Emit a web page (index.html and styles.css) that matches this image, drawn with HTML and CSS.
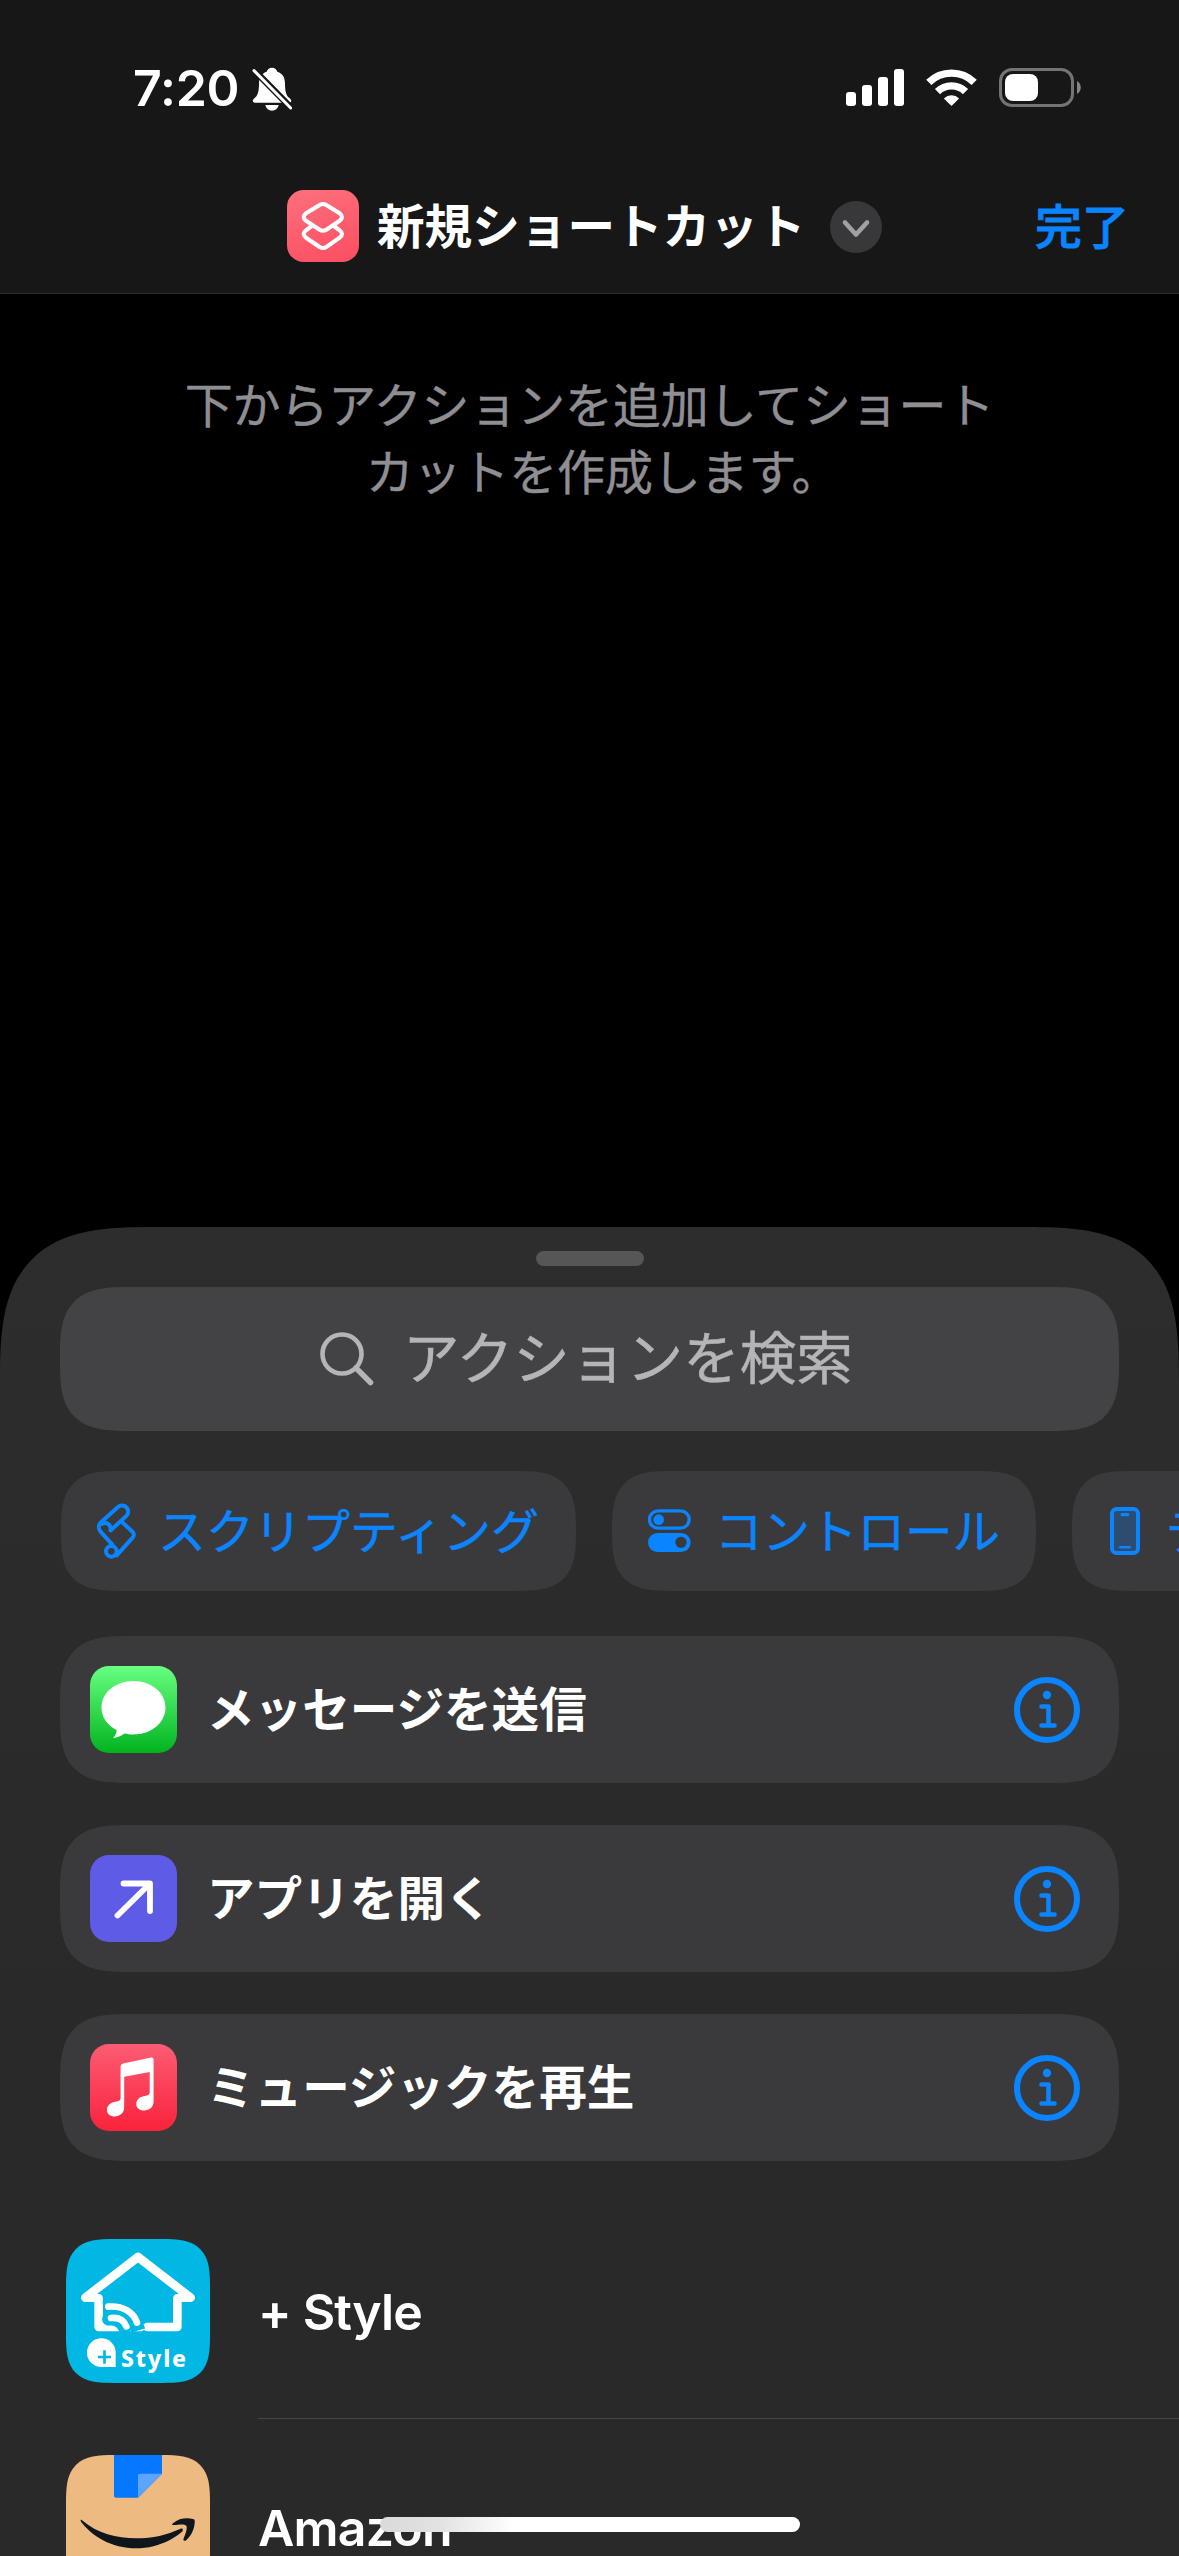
FILE: index.html
```html
<!DOCTYPE html>
<html lang="ja">
<head>
<meta charset="utf-8">
<title>新規ショートカット</title>
<link rel="stylesheet" href="styles.css">
</head>
<body>
<div class="screen">
  <header class="header">
    <div class="status">
      <div class="status-left">
        <span class="time">7:20</span>
        <svg class="bell" viewBox="0 0 120 132" width="40" height="44">
          <path fill="#fff" d="M60 2c-9 0-14 5-16 12C27 20 21 32 21 50c0 24-4 36-14 44-7 6-6 13 3 13h100c9 0 10-7 3-13-10-8-14-20-14-44 0-18-6-30-23-36C74 7 69 2 60 2zM40 114h40c-2 10-10 17-20 17s-18-7-20-17z"/>
          <path stroke="#171717" stroke-width="20" d="M0 3l124 126"/>
          <path stroke="#fff" stroke-width="9" stroke-linecap="round" d="M6 11l110 112"/>
        </svg>
      </div>
      <div class="status-right">
        <svg width="58" height="37" viewBox="0 0 58 37" fill="#fff">
          <rect x="0" y="23" width="10" height="14" rx="3"/><rect x="16" y="16" width="10" height="21" rx="3"/><rect x="32" y="8" width="10" height="29" rx="3"/><rect x="48" y="0" width="10" height="37" rx="3"/>
        </svg>
        <svg class="wifi" width="51" height="37" viewBox="0 0 51 37">
          <g fill="none" stroke="#fff" stroke-width="7.4"><path d="M2.8 13.4a32.5 32.5 0 0 1 45.4 0"/><path d="M11.5 22.6a20 20 0 0 1 28 0"/></g>
          <path fill="#fff" d="M25.5 37l-7.6-7.6a11 11 0 0 1 15.2 0z"/>
        </svg>
        <svg class="battery" width="82" height="39" viewBox="0 0 82 39">
          <rect x="1.5" y="1.5" width="72" height="36" rx="11.5" fill="none" stroke="#747474" stroke-width="3"/>
          <rect x="6" y="6" width="33" height="27" rx="8" fill="#fff"/>
          <path fill="#858585" d="M78 13c5 2.500 5 10.500 0 13z"/>
        </svg>
      </div>
    </div>
    <div class="nav">
      <div class="nav-title">
        <svg class="shortcut-icon" width="72" height="72" viewBox="0 0 216 216">
          <defs><linearGradient id="pink" x1=".3" y1="0" x2=".6" y2="1"><stop offset="0" stop-color="#fe6d7b"/><stop offset="1" stop-color="#fb5163"/></linearGradient></defs>
          <rect width="216" height="216" rx="50" fill="url(#pink)"/>
          <g fill="none" stroke="#fff" stroke-width="12.500" stroke-linejoin="round">
            <path d="M98 45q10-6 20 0l40 25q14 11 0 22l-40 27q-10 6-20 0L57 92q-14-11 0-22z"/>
            <path d="M74 108l-17 13q-14 10 0 22l41 28q10 6 20 0l40-28q14-11 0-22l-17-13"/>
          </g>
        </svg>
        <h1 class="title">新規ショートカット</h1>
        <svg class="chevron" width="52" height="52" viewBox="0 0 52 52">
          <circle cx="26" cy="26" r="26" fill="#38383a"/>
          <path d="M15 21.500l11 12 11-12" fill="none" stroke="#a0a0a7" stroke-width="4.600" stroke-linecap="round" stroke-linejoin="round"/>
        </svg>
      </div>
      <span class="done">完了</span>
    </div>
  </header>

  <main class="canvas">
    <p class="hint">下からアクションを追加してショート<br><span class="hint-end">カットを作成します。</span></p>
  </main>

  <section class="sheet">
    <div class="grabber"></div>
    <div class="search">
      <svg width="54" height="54" viewBox="0 0 54 54" fill="none" stroke="#b5b5b7" stroke-width="4.600" stroke-linecap="round"><circle cx="22" cy="22" r="19.500"/><path d="M36 36l14.500 14.500" stroke-width="5.500"/></svg>
      <span>アクションを検索</span>
    </div>

    <div class="chips">
      <div class="chip chip-script">
        <svg width="60" height="70" viewBox="0 0 180 210" fill="none" stroke="#0a84ff" stroke-width="12" stroke-linecap="round" stroke-linejoin="round">
          <path d="M62 103l46-42A17 17 0 0 0 84 33L33 79A20 20 0 0 0 31 106l36 40"/>
          <path d="M36 84c14-8 28 2 26 19"/>
          <path d="M94 76l34 32a12 12 0 0 1 0 17L80 178"/>
          <circle cx="64" cy="166" r="16"/>
        </svg>
        <span>スクリプティング</span>
      </div>
      <div class="chip chip-control">
        <svg width="60" height="70" viewBox="0 0 180 210">
          <rect x="28.500" y="44.500" width="119" height="52" rx="26" fill="none" stroke="#0a84ff" stroke-width="10"/>
          <circle cx="56" cy="71" r="16" fill="#0a84ff"/>
          <rect x="24" y="111" width="128" height="57" rx="28.500" fill="#0a84ff"/>
          <circle cx="123" cy="139" r="17" fill="#3a3a3c"/>
        </svg>
        <span>コントロール</span>
      </div>
      <div class="chip chip-device">
        <svg width="30" height="48" viewBox="0 0 30 48">
          <rect x="2" y="2" width="26" height="44" rx="4.500" fill="#2e4c70" stroke="#0a84ff" stroke-width="4"/>
          <rect x="10.500" y="6" width="9" height="3.200" rx="1.600" fill="#0a84ff"/><rect x="9" y="39" width="12" height="2.500" rx="1.200" fill="#0a84ff"/>
        </svg>
        <span>デバイス</span>
      </div>
    </div>

    <div class="actions">
      <div class="action">
        <svg width="87" height="87" viewBox="0 0 87 87">
          <defs><linearGradient id="green" x1="0" y1="0" x2="0" y2="1"><stop offset="0" stop-color="#67ff81"/><stop offset="1" stop-color="#01b41f"/></linearGradient></defs>
          <rect width="87" height="87" rx="19" fill="url(#green)"/>
          <path fill="#fff" d="M43.500 15C25.500 15 11.500 26.500 11.500 41.500c0 9.500 5.500 17.500 15 22.500.5 3-1 5-3.500 8 4.500-.5 8-2 11.500-4.500 2.500.5 6 1 9 1 18 0 32-12 32-27S61.500 15 43.500 15z"/>
        </svg>
        <span class="action-name">メッセージを送信</span>
        <svg class="info" width="66" height="66" viewBox="0 0 66 66"><use href="#info"/></svg>
      </div>
      <div class="action">
        <svg width="87" height="87" viewBox="0 0 87 87">
          <rect width="87" height="87" rx="19" fill="#5e5ce6"/>
          <path d="M33.500 28.500h26.500v27.500M59 29.500L27.500 60.500" fill="none" stroke="#fff" stroke-width="5.800" stroke-linecap="round" stroke-linejoin="round"/>
        </svg>
        <span class="action-name">アプリを開く</span>
        <svg class="info" width="66" height="66" viewBox="0 0 66 66"><use href="#info"/></svg>
      </div>
      <div class="action">
        <svg width="87" height="87" viewBox="0 0 87 87">
          <defs><linearGradient id="red" x1="0" y1="0" x2="0" y2="1"><stop offset="0" stop-color="#fb5c74"/><stop offset="1" stop-color="#fa233b"/></linearGradient></defs>
          <rect width="87" height="87" rx="19" fill="url(#red)"/>
          <path fill="#fff" d="M33.200 19.500L61 13.600q2.600-.5 2.600 2V57c0 6-4 9.500-9.500 9.500-4.500 0-7.800-2.500-7.800-6.500s3-6.800 7-7.800c3.800-.9 6.400-.8 6.400-4V28L34.200 32.800V63c0 6-4.500 9.500-9.500 9.500-4.500 0-7.800-2.500-7.800-6.500s3-7 7-8c4-.9 6.700-.8 6.700-4V22.500q0-2.500 2.600-3z"/>
        </svg>
        <span class="action-name">ミュージックを再生</span>
        <svg class="info" width="66" height="66" viewBox="0 0 66 66">
          <g id="info"><circle cx="33" cy="33" r="30" fill="none" stroke="#0a84ff" stroke-width="6"/><circle cx="33" cy="18" r="4.200" fill="#0a84ff"/><path d="M27.500 29.500h7v18.500M27.500 48.500h13" fill="none" stroke="#0a84ff" stroke-width="4.600" stroke-linecap="round" stroke-linejoin="round"/></g>
        </svg>
      </div>
    </div>

    <div class="apps">
      <div class="app">
        <div class="app-icon style-icon">
          <svg width="144" height="144" viewBox="0 0 432 432">
            <g fill="none" stroke="#fff" stroke-linecap="round" stroke-linejoin="round">
              <path stroke-width="26" d="M58 176L216 54l158 122"/>
              <path stroke-width="24" d="M60 177h38M334 177h38"/>
              <path stroke-width="26" d="M98 182v82h126M334 182v82h-90"/>
              <path stroke="#00b8e3" stroke-width="42" stroke-linecap="butt" d="M112 206c50-6 92 20 105 68"/>
              <path stroke="#00b8e3" stroke-width="40" stroke-linecap="round" d="M128 240c24-3 39 7 48 26"/>
              <path stroke-width="20" d="M127 203c45-4 76 18 86 48M135 237c24-3 39 7 46 25"/>
            </g>
            <path fill="#fff" d="M149 384h-43a43 43 0 1 1 43-43z"/>
            <path stroke="#00b8e3" stroke-width="8" d="M96 354h39M115.500 334v40"/>
          </svg>
          <span class="style-word">Style</span>
        </div>
        <div class="app-name">+ Style</div>
      </div>
      <div class="app">
        <div class="app-icon amazon-icon">
          <svg width="144" height="144" viewBox="0 0 432 432">
            <path fill="#0578ff" d="M144 0h144v56l-72 72h-66q-6 0-6-6z"/>
            <path fill="#5ba4ff" d="M288 56l-72 72V62q0-6 6-6z"/>
            <path fill="#0f161c" d="M48 196c46 40 104 54 162 54 52 0 92-10 132-28 8-4 12 3 5 9-38 32-88 49-136 49-66 0-124-28-163-76-5-7-6-12 0-8zM321 205c18-16 42-17 60-13 5 1 6 5 5 11-1 18-9 37-24 51-6 6-12 4-9-4 5-13 12-30 8-38-6-6-24-3-35-2-8 1-10-1-5-5z"/>
          </svg>
        </div>
        <div class="app-name">Amazon</div>
      </div>
    </div>
  </section>
  <div class="home-indicator"></div>
</div>
</body>
</html>
```

FILE: styles.css
```css
* { box-sizing: border-box; }
body { margin: 0; background: #000; }
svg { display: block; flex: none; }

.screen {
  position: relative;
  width: 1179px;
  height: 2556px;
  overflow: hidden;
  display: flex;
  flex-direction: column;
  background: #000;
  color: #fff;
  font-family: "Inter", "Noto Sans CJK JP", sans-serif;
  white-space: nowrap;
}

.header {
  height: 294px;
  flex: none;
  background: #171717;
  border-bottom: 1px solid #2a2a2b;
}
.status {
  height: 176px;
  padding: 0 98px 0 133px;
  display: flex;
  justify-content: space-between;
}
.status-left { display: flex; padding-top: 58px; }
.time { width: 119px; font-size: 50px; line-height: 60px; font-weight: 600; letter-spacing: -0.2px; }
.bell { margin-top: 9px; }
.status-right { display: flex; padding-top: 69px; }
.wifi { margin-left: 22px; }
.battery { margin: -1px 0 0 22px; }

.nav { display: flex; justify-content: space-between; padding: 0 50px 0 287px; height: 100px; }
.nav-title { display: flex; align-items: flex-start; }
.shortcut-icon { margin-top: 14px; }
.title { margin: 15px 0 0 18px; width: 453px; font-size: 47.6px; line-height: 72px; font-weight: 700; }
.chevron { margin-top: 25px; }
.done { padding-top: 15px; font-size: 47px; line-height: 72px; font-weight: 500; color: #0a84ff; -webkit-text-stroke: 0.8px #0a84ff; }

.canvas { height: 933px; flex: none; padding-top: 78px; }
.hint { margin: 0; text-align: center; color: #8e8e93; font-size: 48px; line-height: 67px; letter-spacing: -0.15px; -webkit-text-stroke: 0.4px #8e8e93; }
.hint-end { padding-left: 26px; }

.sheet {
  flex: 1;
  padding: 24px 0 0 60px;
  background: linear-gradient(#2d2d2d, #292929 60%);
  border-radius: 112px 112px 0 0;
}
.grabber { width: 108px; height: 15px; margin: 0 0 21px 476px; border-radius: 8px; background: #565656; }
.search {
  width: 1059px;
  height: 144px;
  padding-left: 260px;
  display: flex;
  align-items: center;
  gap: 29px;
  border-radius: 50px;
  background: #434345;
  color: #b5b5b7;
  font-size: 56.6px;
  line-height: 80px;
  -webkit-text-stroke: 0.5px #b5b5b7;
}

.chips { display: flex; gap: 36px; margin: 40px 0 45px 1px; }
.chip {
  flex: none;
  height: 120px;
  display: flex;
  align-items: center;
  border-radius: 42px;
  background: #3a3a3c;
  color: #0a84ff;
  font-size: 48px;
  line-height: 70px;
  -webkit-text-stroke: 0.5px #0a84ff;
}
.chip span { padding-top: 2px; }
.chip-script { width: 515px; padding-left: 29px; gap: 8px; }
.chip-control { width: 424px; padding-left: 28px; gap: 15px; font-size: 47.5px; }
.chip-device { width: 330px; padding-left: 38px; gap: 26px; }

.actions { display: flex; flex-direction: column; gap: 42px; width: 1059px; }
.action {
  height: 147px;
  padding: 0 39px 0 30px;
  display: flex;
  align-items: center;
  border-radius: 50px;
  background: #3a3a3c;
}
.action-name { margin-left: 30px; font-size: 47.6px; line-height: 70px; font-weight: 700; }
.info { margin-left: auto; }

.apps { margin-top: 42px; padding-left: 6px; }
.app { height: 216px; display: flex; align-items: center; }
.app-icon { position: relative; width: 144px; height: 144px; flex: none; overflow: hidden; border-radius: 34px; }
.style-icon { background: #00b8e3; }
.amazon-icon { background: #edba82; }
.style-word {
  position: absolute;
  left: 55px;
  top: 104px;
  font: 800 23px/30px "Noto Sans", sans-serif;
  letter-spacing: 1.8px;
}
.app-name {
  align-self: stretch;
  flex: 1;
  margin-left: 48px;
  border-bottom: 1px solid #454546;
  font-size: 50px;
  line-height: 218px;
  font-weight: 600;
  letter-spacing: -0.8px;
}
.home-indicator {
  position: absolute;
  left: 380px;
  top: 2517px;
  width: 420px;
  height: 15px;
  border-radius: 8px;
  background: linear-gradient(90deg, #dadada, #e2e2e2 14%, #fff 32%);
}

@supports (corner-shape: squircle) {
  .sheet { border-radius: 156px 156px 0 0; corner-shape: superellipse(1.585); }
  .search { border-radius: 70px; corner-shape: superellipse(1.585); }
  .chip { border-radius: 60px; corner-shape: superellipse(1.585); }
  .action { border-radius: 70px; corner-shape: superellipse(1.585); }
  .app-icon { border-radius: 48px; corner-shape: superellipse(1.585); }
}
```
